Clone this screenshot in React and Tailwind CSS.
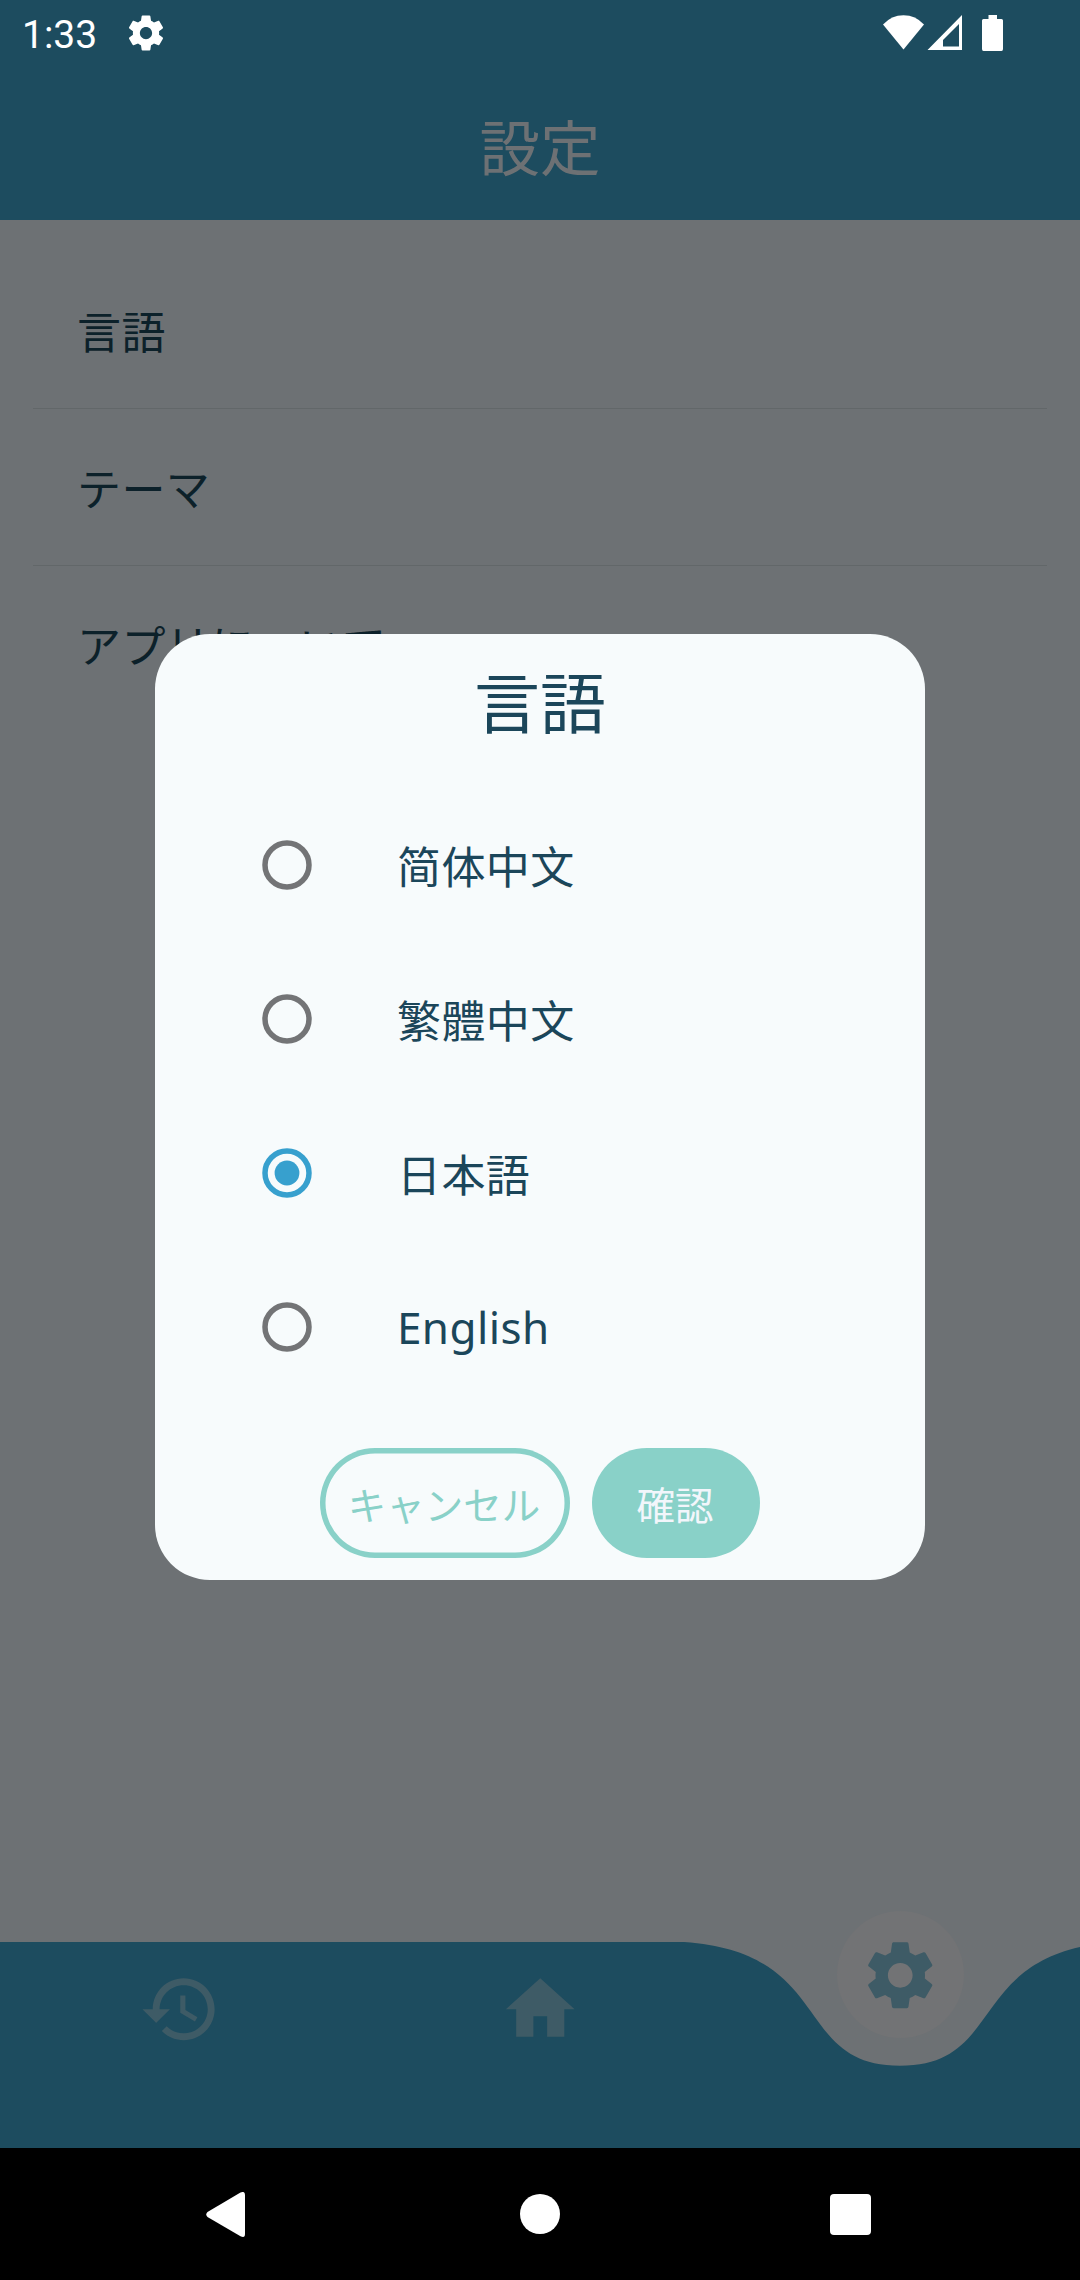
import { MdHome, MdSettings } from "react-icons/md";

const languages = [
  { label: "简体中文", lang: "zh-Hans" },
  { label: "繁體中文", lang: "zh-Hant" },
  { label: "日本語", lang: "ja", selected: true },
  { label: "English", lang: "en" },
];

const settings = ["言語", "テーマ", "アプリについて"];

function StatusGear() {
  return (
    <svg className="ml-[30px] mt-[12px] size-[42px]" viewBox="0 0 24 24" fill="currentColor">
      <path d="M19.43 12.98c.04-.32.07-.64.07-.98s-.03-.66-.07-.98l2.11-1.65c.19-.15.24-.42.12-.64l-2-3.46c-.12-.22-.39-.3-.61-.22l-2.49 1c-.52-.4-1.08-.73-1.69-.98l-.38-2.65C14.460 2.180 14.250 2 14 2h-4c-.25 0-.46.18-.49.42l-.38 2.65c-.61.25-1.17.59-1.69.98l-2.49-1c-.23-.09-.49 0-.61.22l-2 3.46c-.13.22-.07.49.12.64l2.11 1.65c-.04.32-.07.65-.07.98s.03.66.07.98l-2.11 1.65c-.19.15-.24.42-.12.64l2 3.46c.12.22.39.3.61.22l2.49-1c.52.4 1.080.73 1.690.98l.38 2.65c.03.24.24.42.49.42h4c.25 0 .46-.18.49-.42l.38-2.65c.61-.25 1.170-.59 1.690-.98l2.490 1c.23.09.49 0 .61-.22l2-3.46c.12-.22.07-.49-.12-.64l-2.110-1.65zM12 15.500c-1.930 0-3.500-1.570-3.500-3.500s1.570-3.500 3.500-3.500 3.500 1.570 3.500 3.500-1.570 3.500-3.500 3.500z" />
    </svg>
  );
}

function StatusBar() {
  return (
    <div className="flex h-[66px] items-start text-white">
      <span className="ml-[22px] mt-[12px] w-[73px] font-[Roboto] text-[39px] leading-[46px]">1:33</span>
      <StatusGear />
      <svg className="ml-auto mr-[77px] mt-[15px] h-[36px] w-[120px]" viewBox="0 0 120 36" fill="currentColor">
        <path d="M0 9.500Q8.500 .3 20.500 .3T41 9.500L20.500 34.500Z" />
        <path fillRule="evenodd" d="M44.500 35L79 0V35ZM60 31.500H76V9L60 25Z" />
        <path d="M105.500 0H114V4H118.500Q120 4 120 5.500V34Q120 36 118.500 36H100.500Q99 36 99 34V5.500Q99 4 100.500 4H105.500Z" />
      </svg>
    </div>
  );
}

function Radio({ selected }) {
  return (
    <svg className={selected ? "size-[50px] text-[#37a0ce]" : "size-[50px] text-[#737476]"} viewBox="0 0 50 50">
      <circle cx="25" cy="25" r="22" fill="none" stroke="currentColor" strokeWidth="5.5" />
      {selected && <circle cx="25" cy="25" r="12.4" fill="currentColor" />}
    </svg>
  );
}

function LanguageDialog() {
  return (
    <div className="absolute inset-x-0 bottom-[132px] top-[66px] flex items-center justify-center">
      <div className="flex h-[946px] w-[770px] flex-col rounded-[55px] bg-[#f7fbfc] text-[#1b465a]">
        <h2 className="h-[154px] pt-[20px] text-center text-[66px] leading-[96px]">言語</h2>
        {languages.map(({ label, lang, selected }) => (
          <div key={label} className="flex h-[154px] items-center pl-[107px]">
            <Radio selected={selected} />
            <span
              lang={lang}
              className={
                lang === "en"
                  ? "ml-[85px] text-[44px] leading-[64px] tracking-[0.4px]"
                  : "ml-[85px] pt-[4px] text-[44px] leading-[64px] tracking-[0.4px]"
              }
            >
              {label}
            </span>
          </div>
        ))}
        <div className="mt-auto mb-[22px] flex justify-center gap-[22px]">
          <button className="h-[110px] w-[250px] rounded-[55px] pr-[2px] pt-[5px] text-[38.5px] text-[#89d1c8] shadow-[inset_0_0_0_5.5px_#89d1c8]">キャンセル</button>
          <button className="h-[110px] w-[168px] rounded-[55px] bg-[#89d1c8] pr-[2px] pt-[5px] text-[38.5px] text-[#f2f6fb]">確認</button>
        </div>
      </div>
    </div>
  );
}

function BottomNav() {
  return (
    <nav className="relative h-[206.25px]">
      <svg className="absolute inset-0 h-full w-full" viewBox="0 0 1080 206.25" fill="#1d4c5f">
        <path d="M0 0H684C835.2 10.3125 792 123.75 900 123.75C1008 123.75 964.8 10.3125 1116 0V206.25H0Z" />
      </svg>
      <div className="relative grid grid-cols-3 justify-items-center text-[#3e5b66]">
        <svg className="mt-[26.5px] size-[82.5px]" viewBox="0 0 24 24" fill="currentColor">
          <path d="M13 3c-4.970 0-9 4.030-9 9H1l3.890 3.890.07.14L9 12H6c0-3.870 3.130-7 7-7s7 3.130 7 7-3.130 7-7 7c-1.930 0-3.680-.79-4.940-2.060l-1.420 1.420C8.270 19.990 10.510 21 13 21c4.970 0 9-4.030 9-9s-4.030-9-9-9zm-1 5v5l4.280 2.540.72-1.210-3.500-2.080V8H12z" />
        </svg>
        <MdHome className="mt-[26.5px] size-[82.5px]" />
        <div className="-mt-[30.5px] flex size-[127px] items-center justify-center rounded-full bg-[#727375]">
          <MdSettings className="size-[82.5px]" />
        </div>
      </div>
    </nav>
  );
}

function SystemNav() {
  return (
    <div className="flex h-[132px] items-center bg-black pl-[206px] text-white">
      <svg className="h-[45px] w-[39px]" viewBox="0 0 39 45" fill="currentColor">
        <path d="M34.500 .6Q39 -1.500 39 3V42Q39 46.500 34.500 44.200L1.500 25Q-1 22.500 1.500 20Z" />
      </svg>
      <span className="ml-[275px] size-[40px] rounded-full bg-white" />
      <span className="ml-[270px] mt-px size-[41px] rounded-[4px] bg-white" />
    </div>
  );
}

export default function App() {
  return (
    <div lang="ja" className="relative flex h-[2280px] w-[1080px] flex-col overflow-hidden bg-[#6d7174] font-['Noto_Sans','Noto_Sans_CJK_JP',sans-serif]">
      <header className="h-[220px] bg-[#1d4c5f]">
        <StatusBar />
        <h1 className="flex h-[154px] items-center justify-center pt-[10px] text-[60.5px] leading-[88px] text-[#6d7174]">設定</h1>
      </header>
      <main className="flex-1 px-[33px] pt-[32px]">
        {settings.map((label, i) => (
          <div
            key={label}
            className={
              i < 2
                ? "flex h-[157px] items-center border-b border-[#626769] pl-[44px] pt-[4px] text-[44px] tracking-[0.4px] text-[#0c212a]"
                : "flex h-[157px] items-center pl-[44px] pt-[2px] text-[44px] tracking-[0.4px] text-[#0c212a]"
            }
          >
            {label}
          </div>
        ))}
      </main>
      <BottomNav />
      <SystemNav />
      <LanguageDialog />
    </div>
  );
}
